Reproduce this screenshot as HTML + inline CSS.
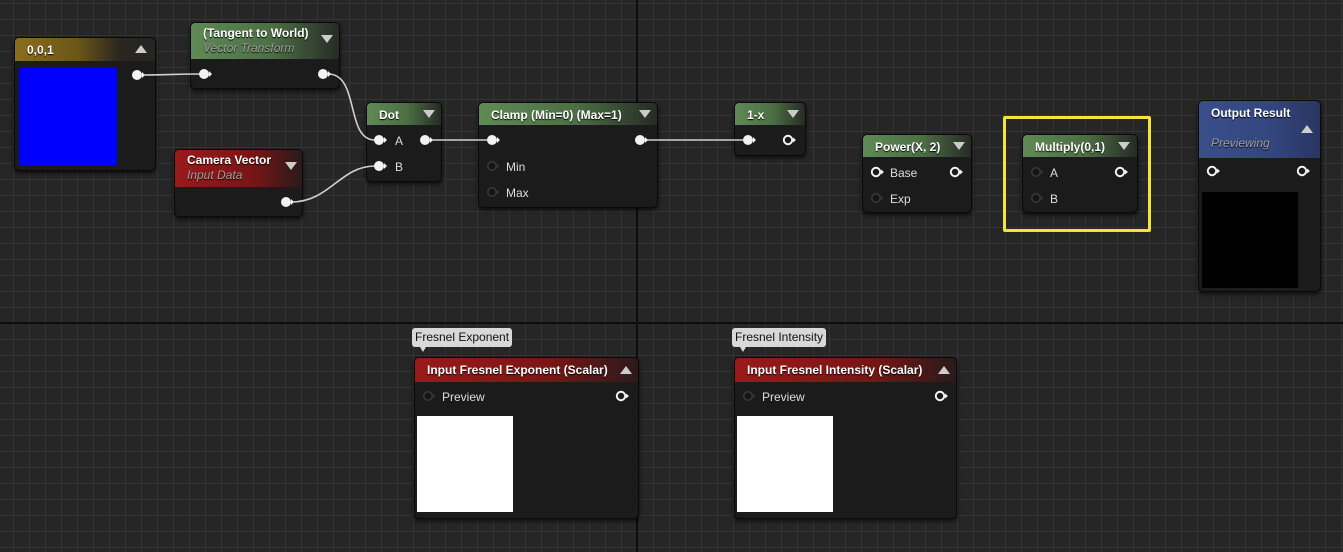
<!DOCTYPE html>
<html><head><style>
body{margin:0;width:1343px;height:552px;overflow:hidden;position:relative;font-family:"Liberation Sans",sans-serif;
background-color:#262626;
background-image:linear-gradient(90deg,#343434 1px,transparent 1px),linear-gradient(#343434 1px,transparent 1px);
background-size:16px 16px;background-position:13px 3px;}
.maj{position:absolute;background:#0c0c0c}
.n{position:absolute;background:#1b1b1b;border:1px solid #0a0a0a;border-radius:5px;box-shadow:0 2px 4px rgba(0,0,0,.7);overflow:hidden}
.h{position:absolute;left:0;right:0;top:0;color:#fff;font-weight:bold;font-size:12px;padding:3px 0 0 12px;box-sizing:border-box;text-shadow:0 1px 1px #000}
.h i{display:block;font-style:italic;font-weight:normal;color:#a0a0a0;font-size:12px;margin-top:1px}
.g{background:linear-gradient(90deg,#5f8a55 0%,#4c6e44 55%,#262b25 100%)}
.r{background:linear-gradient(90deg,#9a1a1a 0%,#7a1515 60%,#2a1a1a 100%)}
.y{background:linear-gradient(90deg,#8a6d1e 0%,#6b5518 45%,#2a2620 75%,#252525 100%)}
.b{background:linear-gradient(90deg,#3a4e8a 0%,#33467e 60%,#2a3560 100%)}
.t{position:absolute;width:0;height:0;border-left:6px solid transparent;border-right:6px solid transparent}
.dn{border-top:8px solid #ccc}.up{border-bottom:8px solid #ccc}
.l{position:absolute;color:#ddd;font-size:12px}
.tip{position:absolute;background:#d8d8d8;color:#111;font-size:12px;border-radius:3px;padding:2px 3px;height:15px;line-height:15px}
</style></head><body>
<div class="maj" style="left:636px;top:0;width:2px;height:552px"></div>
<div class="maj" style="left:0;top:322px;width:1343px;height:2px"></div>

<!-- 0,0,1 -->
<div class="n" style="left:14px;top:37px;width:140px;height:132px">
<div class="h y" style="height:23px;padding-top:5px">0,0,1</div><div class="t up" style="left:120px;top:7px"></div>
<div style="position:absolute;left:4px;top:30px;width:98px;height:97px;background:#0000ff"></div></div>
<!-- Tangent -->
<div class="n" style="left:190px;top:22px;width:148px;height:65px">
<div class="h g" style="height:36px">(Tangent to World)<i>Vector Transform</i></div><div class="t dn" style="left:130px;top:12px"></div></div>
<!-- Camera -->
<div class="n" style="left:174px;top:149px;width:127px;height:66px">
<div class="h r" style="height:37px">Camera Vector<i>Input Data</i></div><div class="t dn" style="left:110px;top:12px"></div></div>
<!-- Dot -->
<div class="n" style="left:366px;top:102px;width:74px;height:78px">
<div class="h g" style="height:22px;padding-top:5px">Dot</div><div class="t dn" style="left:56px;top:7px"></div>
<div class="l" style="left:28px;top:31px">A</div><div class="l" style="left:28px;top:57px">B</div></div>
<!-- Clamp -->
<div class="n" style="left:478px;top:102px;width:178px;height:104px">
<div class="h g" style="height:22px;padding-top:5px">Clamp (Min=0) (Max=1)</div><div class="t dn" style="left:160px;top:7px"></div>
<div class="l" style="left:27px;top:57px">Min</div><div class="l" style="left:27px;top:83px">Max</div></div>
<!-- 1-x -->
<div class="n" style="left:734px;top:102px;width:70px;height:52px">
<div class="h g" style="height:22px;padding-top:5px">1-x</div><div class="t dn" style="left:52px;top:7px"></div></div>
<!-- Power -->
<div class="n" style="left:862px;top:134px;width:108px;height:77px">
<div class="h g" style="height:22px;padding-top:5px">Power(X, 2)</div><div class="t dn" style="left:90px;top:7px"></div>
<div class="l" style="left:27px;top:31px">Base</div><div class="l" style="left:27px;top:57px">Exp</div></div>
<!-- Multiply -->
<div class="n" style="left:1022px;top:134px;width:114px;height:77px">
<div class="h g" style="height:22px;padding-top:5px">Multiply(0,1)</div><div class="t dn" style="left:95px;top:7px"></div>
<div class="l" style="left:27px;top:31px">A</div><div class="l" style="left:27px;top:57px">B</div></div>
<div style="position:absolute;left:1003px;top:116px;width:142px;height:110px;border:3px solid #f2e43a;border-radius:2px"></div>
<!-- Output -->
<div class="n" style="left:1198px;top:100px;width:121px;height:190px">
<div class="h b" style="height:57px;padding-top:5px">Output Result<i style="margin-top:16px">Previewing</i></div><div class="t up" style="left:102px;top:24px"></div>
<div style="position:absolute;left:3px;top:91px;width:96px;height:96px;background:#000"></div></div>
<!-- Fresnel Exponent -->
<div class="tip" style="left:412px;top:328px">Fresnel Exponent</div>
<div class="n" style="left:414px;top:357px;width:223px;height:160px">
<div class="h r" style="height:24px;padding-top:5px">Input Fresnel Exponent (Scalar)</div><div class="t up" style="left:205px;top:8px"></div>
<div class="l" style="left:27px;top:32px">Preview</div>
<div style="position:absolute;left:2px;top:58px;width:96px;height:96px;background:#fff"></div></div>
<!-- Fresnel Intensity -->
<div class="tip" style="left:732px;top:328px">Fresnel Intensity</div>
<div class="n" style="left:734px;top:357px;width:221px;height:160px">
<div class="h r" style="height:24px;padding-top:5px">Input Fresnel Intensity (Scalar)</div><div class="t up" style="left:203px;top:8px"></div>
<div class="l" style="left:27px;top:32px">Preview</div>
<div style="position:absolute;left:2px;top:58px;width:96px;height:96px;background:#fff"></div></div>

<svg width="1343" height="552" style="position:absolute;left:0;top:0">
<g fill="none" stroke="#d0d0d0" stroke-width="1.6">
<path d="M142 75 C170 75,175 74,200 74"/>
<path d="M328 74 C360 74,345 140,375 140"/>
<path d="M291 202 C330 202,340 166,375 166"/>
<path d="M430 140 L488 140"/>
<path d="M645 140 L744 140"/>
</g>
<defs>
<g id="f"><circle r="5" fill="#f2f2f2"/><path d="M5 -3 L8 0 L5 3Z" fill="#f2f2f2"/></g>
<g id="o"><circle r="4.2" fill="none" stroke="#f2f2f2" stroke-width="2"/><path d="M5 -2.5 L8 0 L5 2.5Z" fill="#f2f2f2"/></g>
<g id="d"><circle r="4.2" fill="#151515" stroke="#3a3a3a" stroke-width="1.5"/><path d="M5 -2 L7 0 L5 2Z" fill="#3a3a3a"/></g>
</defs>
<use href="#f" x="137" y="75"/><use href="#f" x="204" y="74"/><use href="#f" x="323" y="74"/>
<use href="#f" x="286" y="202"/><use href="#f" x="379" y="140"/><use href="#f" x="379" y="166"/><use href="#f" x="425" y="140"/>
<use href="#f" x="492" y="140"/><use href="#d" x="492" y="166"/><use href="#d" x="492" y="192"/><use href="#f" x="640" y="140"/>
<use href="#f" x="748" y="140"/><use href="#o" x="788" y="140"/>
<use href="#o" x="876" y="172"/><use href="#d" x="876" y="198"/><use href="#o" x="955" y="172"/>
<use href="#d" x="1036" y="172"/><use href="#d" x="1036" y="198"/><use href="#o" x="1120" y="172"/>
<use href="#o" x="1212" y="171"/><use href="#o" x="1302" y="171"/>
<use href="#d" x="428" y="396"/><use href="#o" x="621" y="396"/>
<use href="#d" x="748" y="396"/><use href="#o" x="940" y="396"/>
<path d="M420 347 L426 347 L423 352Z" fill="#d8d8d8"/>
<path d="M740 347 L746 347 L743 352Z" fill="#d8d8d8"/>
</svg>
</body></html>
